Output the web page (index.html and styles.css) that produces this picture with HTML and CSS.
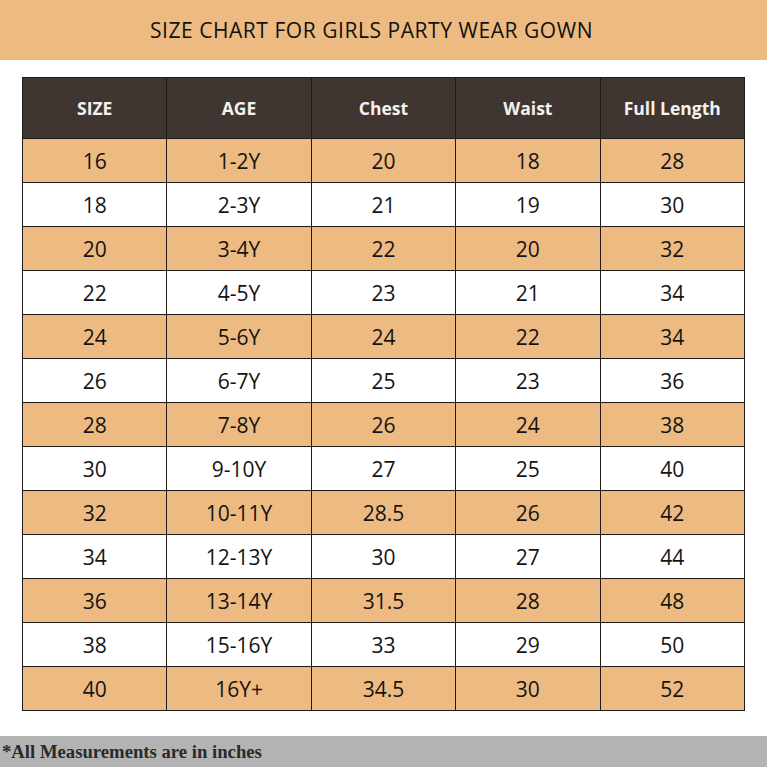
FILE: index.html
```html
<!DOCTYPE html>
<html>
<head>
<meta charset="utf-8">
<link rel="stylesheet" href="styles.css">
</head>
<body>
<div class="page">
  <header class="title-band"><h1 class="title">SIZE CHART FOR GIRLS PARTY WEAR GOWN</h1></header>
  <main class="chart-wrap">
    <table class="chart">
      <thead>
        <tr><th>SIZE</th><th>AGE</th><th>Chest</th><th>Waist</th><th>Full Length</th></tr>
      </thead>
      <tbody>
        <tr class="odd"><td>16</td><td>1-2Y</td><td>20</td><td>18</td><td>28</td></tr>
        <tr><td>18</td><td>2-3Y</td><td>21</td><td>19</td><td>30</td></tr>
        <tr class="odd"><td>20</td><td>3-4Y</td><td>22</td><td>20</td><td>32</td></tr>
        <tr><td>22</td><td>4-5Y</td><td>23</td><td>21</td><td>34</td></tr>
        <tr class="odd"><td>24</td><td>5-6Y</td><td>24</td><td>22</td><td>34</td></tr>
        <tr><td>26</td><td>6-7Y</td><td>25</td><td>23</td><td>36</td></tr>
        <tr class="odd"><td>28</td><td>7-8Y</td><td>26</td><td>24</td><td>38</td></tr>
        <tr><td>30</td><td>9-10Y</td><td>27</td><td>25</td><td>40</td></tr>
        <tr class="odd"><td>32</td><td>10-11Y</td><td>28.5</td><td>26</td><td>42</td></tr>
        <tr><td>34</td><td>12-13Y</td><td>30</td><td>27</td><td>44</td></tr>
        <tr class="odd"><td>36</td><td>13-14Y</td><td>31.5</td><td>28</td><td>48</td></tr>
        <tr><td>38</td><td>15-16Y</td><td>33</td><td>29</td><td>50</td></tr>
        <tr class="odd"><td>40</td><td>16Y+</td><td>34.5</td><td>30</td><td>52</td></tr>
      </tbody>
    </table>
  </main>
  <footer class="note-band"><p class="note">*All Measurements are in inches</p></footer>
</div>
</body>
</html>
```
FILE: styles.css
```css
html, body {
  margin: 0;
  padding: 0;
  background: #ffffff;
}
.page {
  width: 767px;
  height: 767px;
  display: flex;
  flex-direction: column;
  overflow: hidden;
}
.title-band {
  height: 60px;
  background: #edbb82;
  display: flex;
  align-items: center;
  justify-content: center;
  padding-right: 24px;
}
.title {
  margin: 0;
  font-family: "Open Sans", sans-serif;
  font-weight: 400;
  font-size: 21px;
  color: #111111;
  letter-spacing: 0.55px;
}
.chart-wrap {
  padding: 17px 22px 0 22px;
  flex: 1;
}
.chart {
  width: 723px;
  border-collapse: collapse;
  table-layout: fixed;
  font-family: "Open Sans", sans-serif;
}
.chart th, .chart td {
  border: 1.5px solid #1e1a18;
  text-align: center;
  padding: 0;
}
.chart th {
  height: 60px;
  background: #3f3631;
  color: #f4f1ee;
  font-weight: 700;
  font-size: 17.5px;
}
.chart td {
  height: 43px;
  font-size: 21px;
  color: #141414;
  background: #ffffff;
}
.chart tr.odd td {
  background: #edbb82;
}
.note-band {
  height: 31px;
  background: #b3b3b3;
  display: flex;
  align-items: center;
}
.note {
  margin: 0 0 0 2px;
  font-family: "Liberation Serif", serif;
  font-weight: 700;
  font-size: 18.7px;
  color: #2a2a2a;
}
```
